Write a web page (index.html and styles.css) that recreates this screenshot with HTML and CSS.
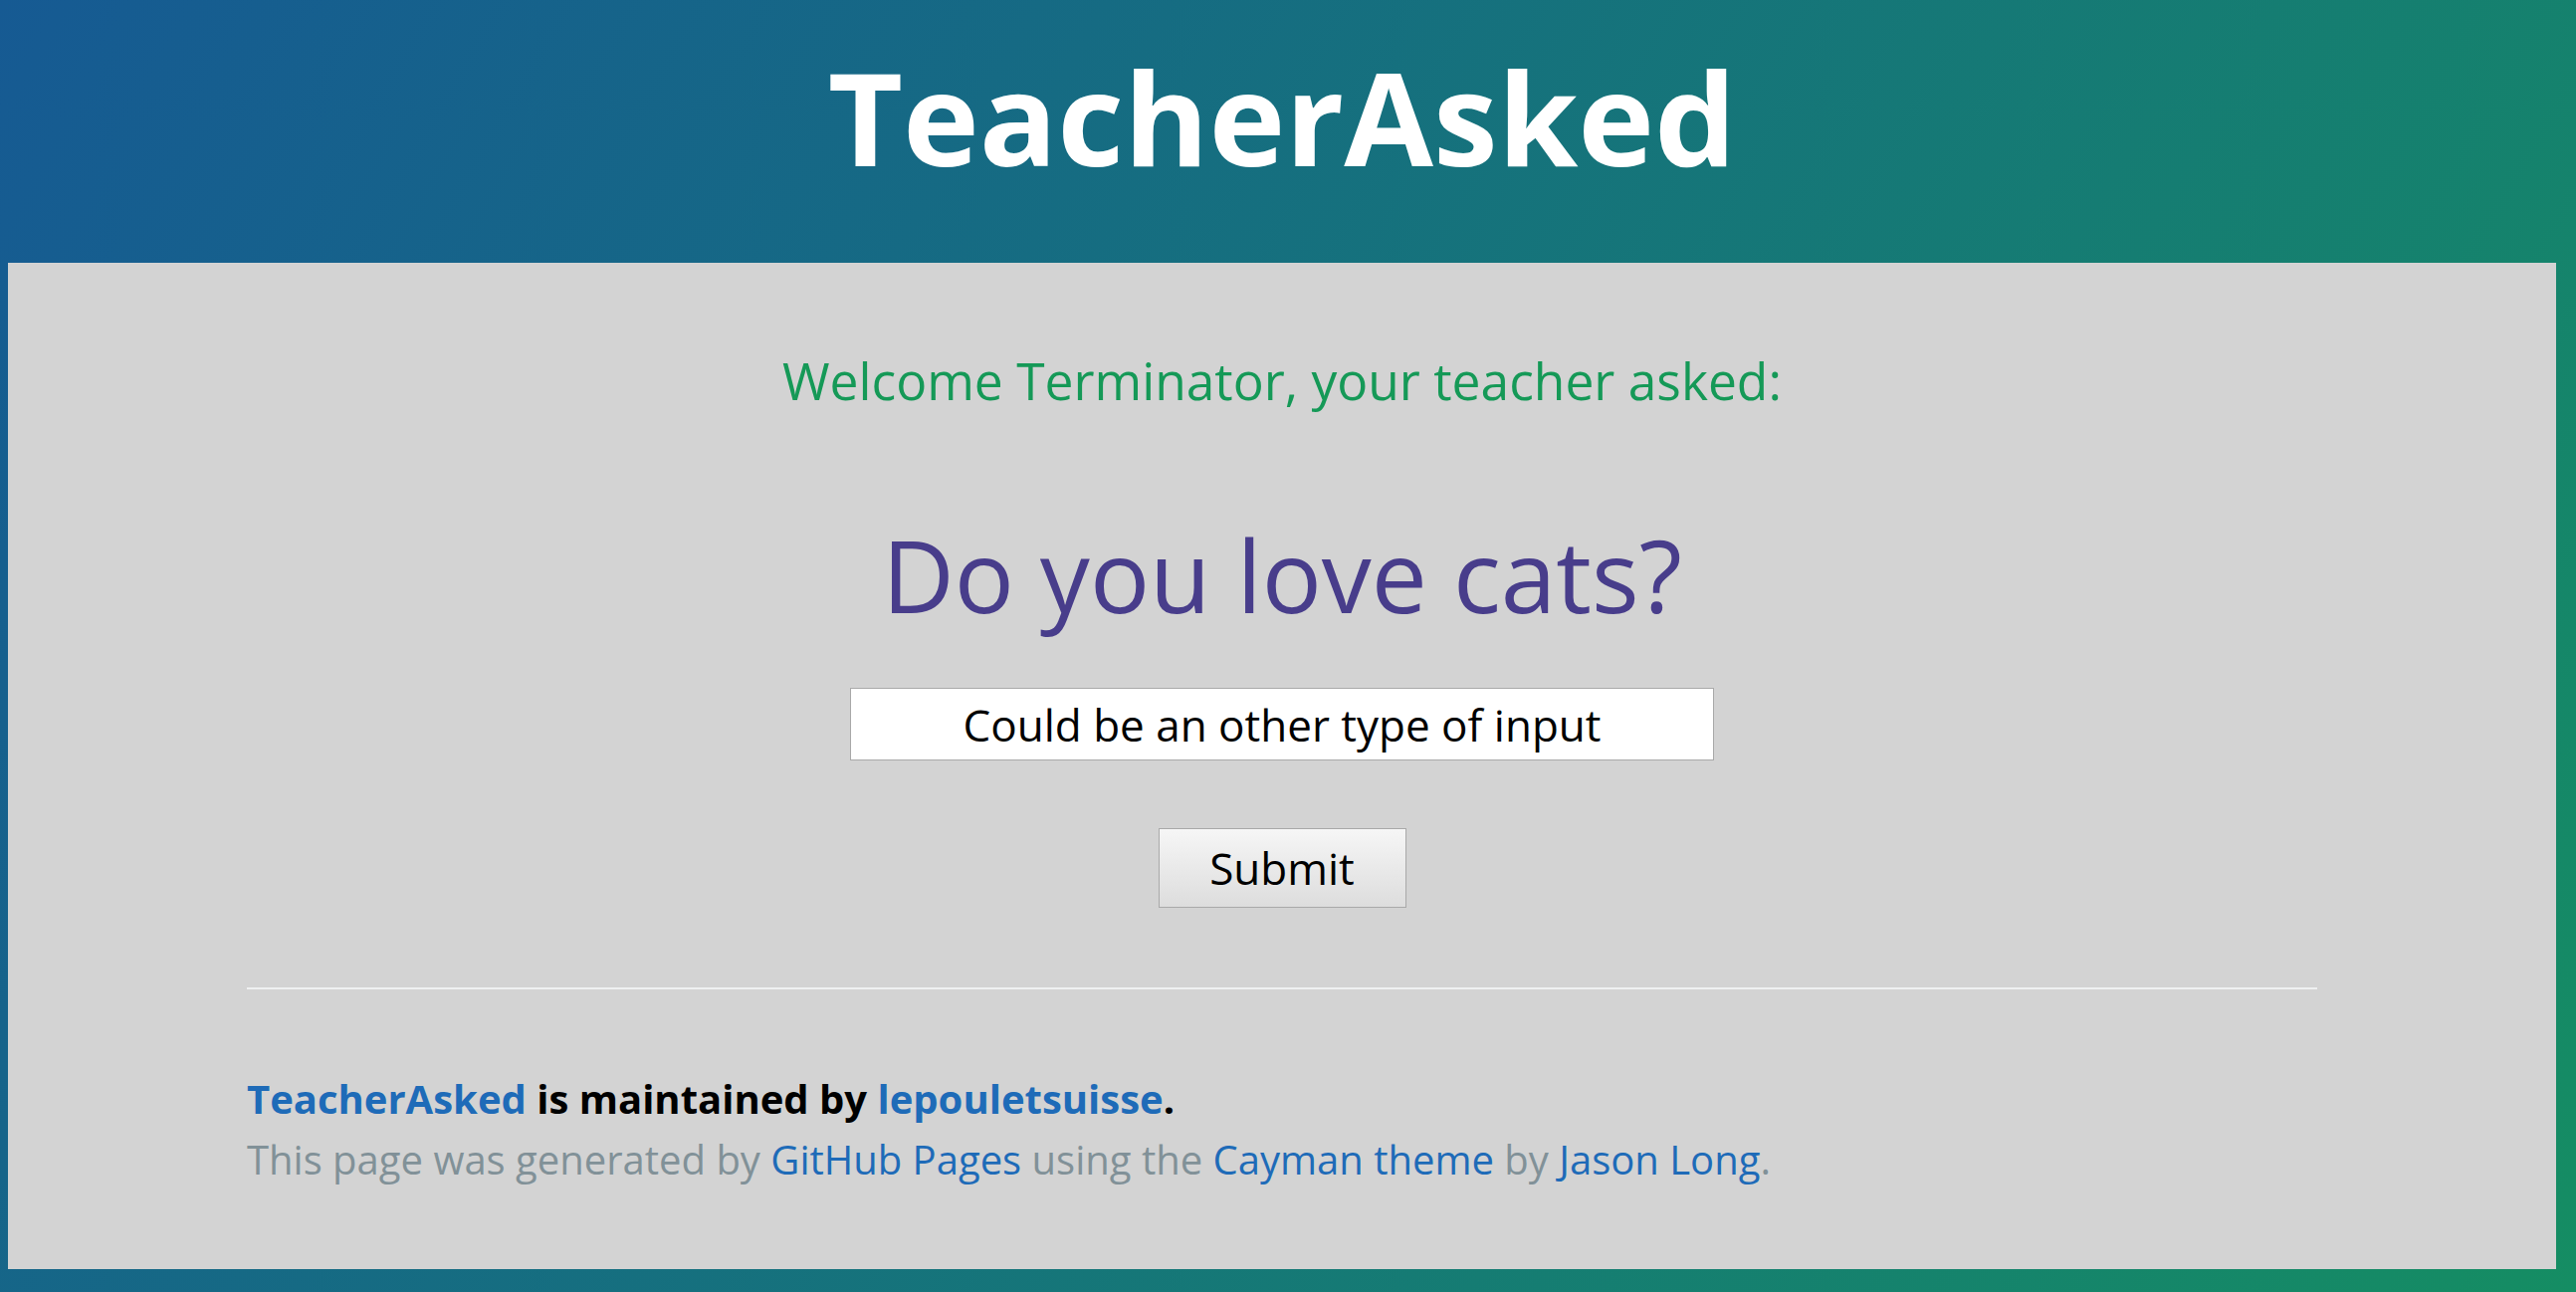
FILE: index.html
```html
<!DOCTYPE html>
<html lang="en">
<head>
<meta charset="utf-8">
<title>TeacherAsked</title>
<link rel="stylesheet" href="styles.css">
</head>
<body>
<header class="page-header">
  <h1 class="project-name">TeacherAsked</h1>
</header>
<main class="main-content">
  <h2 class="welcome">Welcome Terminator, your teacher asked:</h2>
  <p class="question">Do you love cats?</p>
  <form class="answer-form">
    <input class="answer-input" type="text" value="Could be an other type of input">
    <button class="submit-btn" type="button">Submit</button>
  </form>
  <footer class="site-footer">
    <span class="site-footer-owner"><a href="#">TeacherAsked</a> is maintained by <a href="#">lepouletsuisse</a>.</span>
    <span class="site-footer-credits">This page was generated by <a href="#">GitHub Pages</a> using the <a href="#">Cayman theme</a> by <a href="#">Jason Long</a>.</span>
  </footer>
</main>
</body>
</html>
```
FILE: styles.css
```css
html {
  min-height: 100%;
  background: linear-gradient(120deg, #165a93, #158d63);
}
body {
  margin: 0;
  min-height: 1298px;
  font-family: "Open Sans", "Liberation Sans", Arial, sans-serif;
  font-size: 40px;
  line-height: 1.5;
  color: #606c71;
  background: linear-gradient(120deg, #165a93, #158d63);
}
a {
  color: #1e6bb8;
  text-decoration: none;
}
.page-header {
  width: 2576px;
  padding: 19px 0 50px;
  text-align: center;
  color: #fff;
}
.project-name {
  margin: 0;
  font-size: 130px;
  font-weight: 700;
  line-height: 195px;
}
.main-content {
  width: 2560px;
  box-sizing: border-box;
  margin: 0 0 0 8px;
  padding: 81px 240px 80px;
  background: #d3d3d3;
  text-align: center;
}
.welcome {
  margin: 0;
  font-size: 51.5px;
  font-weight: 400;
  line-height: 75px;
  color: #159957;
}
.question {
  margin: 84px 0 0;
  font-size: 100px;
  line-height: 147px;
  color: #483d8b;
}
.answer-form {
  display: flex;
  flex-direction: column;
  align-items: center;
  gap: 68px;
  margin-top: 40px;
}
.answer-input {
  box-sizing: border-box;
  width: 868px;
  height: 73px;
  margin: 0;
  padding: 0 10px;
  border: 1px solid #a9a9a9;
  background: #fff;
  font-family: "Open Sans", "Liberation Sans", Arial, sans-serif;
  font-size: 44px;
  color: #000;
  text-align: center;
}
.submit-btn {
  box-sizing: border-box;
  width: 249px;
  height: 80px;
  margin: 0;
  padding: 0;
  border: 1px solid #a9a9a9;
  border-radius: 0;
  background: linear-gradient(#f6f6f6, #dddddd);
  font-family: "Open Sans", "Liberation Sans", Arial, sans-serif;
  font-size: 44px;
  color: #000;
}
.site-footer {
  margin-top: 80px;
  padding-top: 79px;
  border-top: 2px solid #eff0f1;
  text-align: left;
  font-size: 40px;
}
.site-footer-owner {
  display: block;
  font-weight: 700;
  color: #000;
  line-height: 62px;
}
.site-footer-credits {
  display: block;
  color: #819198;
  line-height: 60px;
}
```
